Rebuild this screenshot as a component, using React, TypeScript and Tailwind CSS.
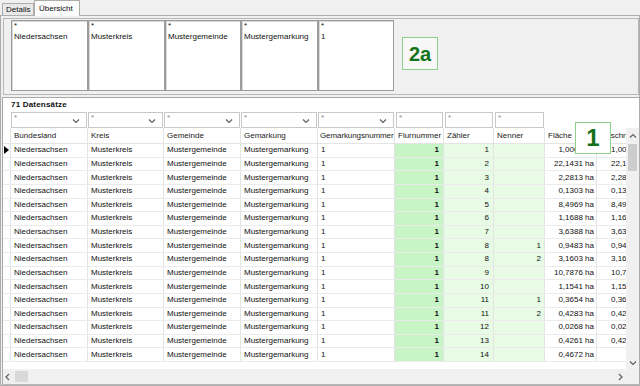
import clsx from 'clsx';
import { twMerge } from 'tailwind-merge';

const rows = [
  ['1', '', '1,0000 ha'],
  ['2', '', '22,1431 ha'],
  ['3', '', '2,2813 ha'],
  ['4', '', '0,1303 ha'],
  ['5', '', '8,4969 ha'],
  ['6', '', '1,1688 ha'],
  ['7', '', '3,6388 ha'],
  ['8', '1', '0,9483 ha'],
  ['8', '2', '3,1603 ha'],
  ['9', '', '10,7876 ha'],
  ['10', '', '1,1541 ha'],
  ['11', '1', '0,3654 ha'],
  ['11', '2', '0,4283 ha'],
  ['12', '', '0,0268 ha'],
  ['13', '', '0,4261 ha'],
  ['14', '', '0,4672 ha'],
];

const summary = [
  { v: 'Niedersachsen', w: 'w-[77px]' },
  { v: 'Musterkreis', w: 'w-[77px]' },
  { v: 'Mustergemeinde', w: 'w-[76px]' },
  { v: 'Mustergemarkung', w: 'w-[77px]' },
  { v: '1', w: 'w-[76px]' },
];

const Chevron = ({ dir = 'down' }: { dir?: 'down' | 'up' | 'left' | 'right' }) => {
  const d = {
    down: 'M1 1.5 L4 4.5 L7 1.5',
    up: 'M1 4.5 L4 1.5 L7 4.5',
    left: 'M5 1 L2 4 L5 7',
    right: 'M3 1 L6 4 L3 7',
  }[dir];
  const vert = dir === 'down' || dir === 'up';
  return (
    <svg className="shrink-0" width={8} height={vert ? 6 : 8} viewBox={vert ? '0 0 8 6' : '0 0 8 8'}>
      <path d={d} fill="none" stroke="#606060" strokeWidth="1.2" />
    </svg>
  );
};

const Cell = ({
  w,
  className,
  children,
}: {
  w: string;
  className?: string;
  children?: React.ReactNode;
}) => (
  <div
    className={twMerge(
      'shrink-0 h-full border-r border-[#e4e4e4] px-[3px] flex items-center overflow-hidden whitespace-nowrap',
      w,
      className
    )}
  >
    {children}
  </div>
);

const Combo = ({ w }: { w: string }) => (
  <div className={clsx('shrink-0 h-full pr-[1px]', w)}>
    <div className="h-full bg-white border border-[#c8c8c8] flex items-start pl-[2px] pr-[6px] pt-[1px]">
      <span className="text-[#8a8a8a] leading-[8px]">*</span>
      <span className="ml-auto self-center flex">
        <Chevron />
      </span>
    </div>
  </div>
);

const TextBox = ({ w }: { w: string }) => (
  <div className={clsx('shrink-0 h-full px-[1px]', w)}>
    <div className="h-full bg-white border border-[#c8c8c8] pl-[2px] pt-[1px] text-[#8a8a8a] leading-[8px]">*</div>
  </div>
);

export default function App() {
  return (
    <div className="w-[640px] h-[386px] bg-[#f0f0f0] flex flex-col overflow-hidden text-[8px] text-[#111] font-['Liberation_Sans',Arial,sans-serif]">
      {/* tabs */}
      <div className="h-[15px] flex items-end pl-[2px] shrink-0">
        <div className="h-[12px] w-[32px] border border-b-0 border-[#adadad] bg-[#e8e8e8] flex items-center pl-[3px]">
          Details
        </div>
        <div className="h-[16px] w-[46px] -mb-px relative z-10 border border-b-0 border-[#adadad] bg-[#fbfbfb] flex items-start pt-[2px] pl-[4px]">
          Übersicht
        </div>
      </div>

      <div className="flex-1 border border-[#adadad] flex flex-col min-h-0">
        {/* Übersicht panel */}
        <div className="h-[77px] mt-[2px] ml-[2px] shrink-0 border border-[#b8b8b8] flex items-start pl-[7px] pt-[1px]">
          {summary.map((s, i) => (
            <div
              key={i}
              className={clsx(
                'h-[71px] shrink-0 bg-white border border-[#9c9c9c] shadow-[inset_1px_1px_0_#d8d8d8] pl-[2px] pt-[1px]',
                s.w
              )}
            >
              <div className="leading-[8px]">*</div>
              <div className="mt-[2px] leading-[10px] whitespace-nowrap">{s.v}</div>
            </div>
          ))}
          <div className="ml-[8px] mt-[17px] w-[36px] h-[33px] border-[1.5px] border-[#8ecf8e] bg-[#f7f7f7] flex items-center justify-center text-[20px] font-bold text-[#13731a]">
            2a
          </div>
        </div>

        {/* data panel */}
        <div className="relative flex-1 min-h-0 mt-[2px] ml-[1px] bg-white border-t border-l border-[#a8a8a8] flex flex-col">
          <div className="h-[14px] shrink-0 flex items-center pl-[8px] font-bold tracking-[0.2px]">71 Datensätze</div>

          <div className="h-[16px] shrink-0 flex pl-[8px]">
            <Combo w="w-[77px]" />
            <Combo w="w-[76px]" />
            <Combo w="w-[77px]" />
            <Combo w="w-[77px]" />
            <Combo w="w-[77px]" />
            <TextBox w="w-[49px]" />
            <TextBox w="w-[50px]" />
            <TextBox w="w-[51px]" />
          </div>

          <div className="flex-1 min-h-0 flex flex-col border-b border-[#b8b8b8]">
            <div className="flex-1 min-h-0 flex">
              <div className="flex-1 min-w-0 overflow-hidden">
                <div className="h-[16px] flex border-b border-[#e4e4e4] text-[#222]">
                  <Cell w="w-[8px]" className="px-0" />
                  <Cell w="w-[77px]">Bundesland</Cell>
                  <Cell w="w-[76px]">Kreis</Cell>
                  <Cell w="w-[77px]">Gemeinde</Cell>
                  <Cell w="w-[77px]">Gemarkung</Cell>
                  <Cell w="w-[77px]" className="pl-[2px] pr-0 tracking-[-0.1px]">Gemarkungsnummer</Cell>
                  <Cell w="w-[49px]">Flurnummer</Cell>
                  <Cell w="w-[50px]">Zähler</Cell>
                  <Cell w="w-[51px]">Nenner</Cell>
                  <Cell w="w-[52px]">Fläche</Cell>
                  <Cell w="w-[40px]" className="border-r-0">Geschnitten</Cell>
                </div>
                {rows.map(([z, n, f], i) => (
                  <div key={i} className="h-[13.625px] flex border-b border-[#ebebeb]">
                    <Cell w="w-[8px]" className="px-0 pl-[1px]">
                      {i === 0 && (
                        <svg className="shrink-0" width="5" height="8" viewBox="0 0 5 8">
                          <polygon points="0,0 5,4 0,8" fill="#000" />
                        </svg>
                      )}
                    </Cell>
                    <Cell w="w-[77px]">Niedersachsen</Cell>
                    <Cell w="w-[76px]">Musterkreis</Cell>
                    <Cell w="w-[77px]">Mustergemeinde</Cell>
                    <Cell w="w-[77px]">Mustergemarkung</Cell>
                    <Cell w="w-[77px]">1</Cell>
                    <Cell w="w-[49px]" className="bg-[#c8f5c6] justify-end font-bold pr-[4px]">1</Cell>
                    <Cell w="w-[50px]" className="bg-[#e7fbe5] justify-end pr-[4px]">{z}</Cell>
                    <Cell w="w-[51px]" className="bg-[#e7fbe5] justify-end pr-[3px]">{n}</Cell>
                    <Cell w="w-[52px]" className="justify-end pr-[2px]">{f}</Cell>
                    <Cell w="w-[40px]" className="border-r-0 pl-[14px]">{i === rows.length - 1 ? '' : f}</Cell>
                  </div>
                ))}
              </div>
              {/* vertical scrollbar */}
              <div className="w-[13px] shrink-0 bg-[#f0f0f0] flex flex-col items-center">
                <div className="h-[16px] flex items-center justify-center">
                  <Chevron dir="up" />
                </div>
                <div className="w-[9px] h-[27px] bg-[#cdcdcd]" />
                <div className="flex-1" />
                <div className="h-[12px] flex items-center justify-center">
                  <Chevron dir="down" />
                </div>
              </div>
            </div>
            {/* horizontal scrollbar */}
            <div className="h-[15px] shrink-0 flex bg-[#f0f0f0]">
              <div className="w-[10px] flex items-center justify-center">
                <Chevron dir="left" />
              </div>
              <div className="ml-[2px] mt-[2px] w-[13px] h-[11px] bg-[#d9d9d9]" />
              <div className="flex-1" />
              <div className="w-[13px] flex items-center justify-center">
                <Chevron dir="right" />
              </div>
              <div className="w-[13px] bg-[#f0f0f0]" />
            </div>
          </div>

          <div className="absolute left-[572px] top-[24px] w-[36px] h-[32px] bg-white border-[1.5px] border-[#8ecf8e] flex items-center justify-center text-[24px] font-bold text-[#16701a]">
            1
          </div>
        </div>
      </div>
    </div>
  );
}
